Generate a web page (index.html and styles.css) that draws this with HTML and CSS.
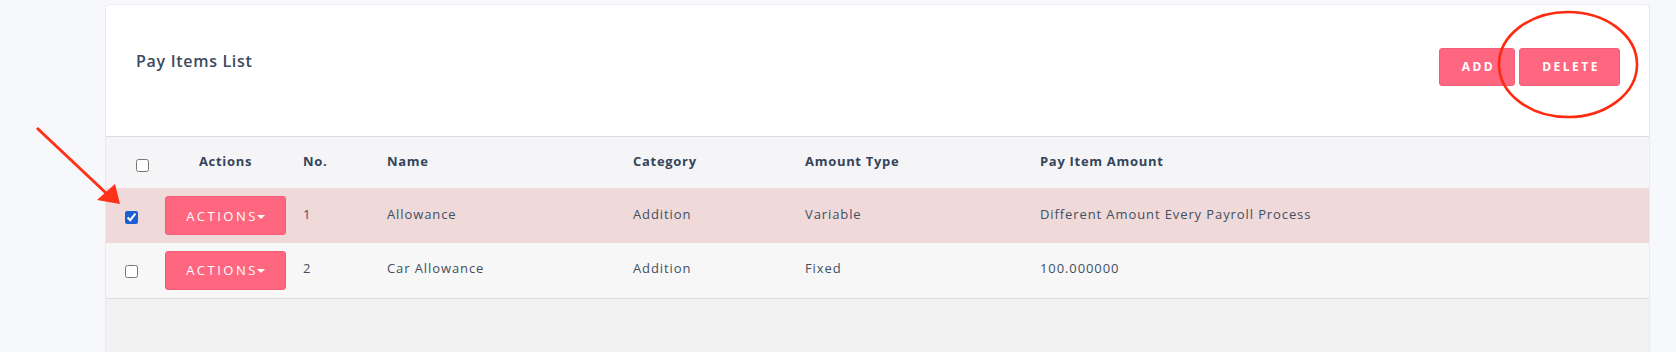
FILE: index.html
```html
<!DOCTYPE html>
<html lang="en">
  <head>
    <meta charset="UTF-8" />
    <meta name="viewport" content="width=device-width, initial-scale=1.0" />
    <title>Pay Items List</title>
    <link rel="stylesheet" href="styles.css">
  </head>
  <body>
    <section class="panel">
      <div class="panel-head">
        <h1>Pay Items List</h1>
        <div class="head-buttons">
          <button class="pink-btn">ADD</button>
          <button class="pink-btn">DELETE</button>
        </div>
      </div>

      <table class="pay-table">
        <colgroup>
          <col style="width: 49px" />
          <col style="width: 138px" />
          <col style="width: 84px" />
          <col style="width: 246px" />
          <col style="width: 172px" />
          <col style="width: 235px" />
          <col />
        </colgroup>
        <thead>
          <tr>
            <th class="check-head"><input type="checkbox" /></th>
            <th class="actions-head">Actions</th>
            <th>No.</th>
            <th>Name</th>
            <th>Category</th>
            <th>Amount Type</th>
            <th>Pay Item Amount</th>
          </tr>
        </thead>
        <tbody>
          <tr class="selected">
            <td class="check-cell"><input type="checkbox" checked /></td>
            <td class="actions-cell"><button class="actions-btn">ACTIONS<span class="caret"></span></button></td>
            <td>1</td>
            <td>Allowance</td>
            <td>Addition</td>
            <td>Variable</td>
            <td>Different Amount Every Payroll Process</td>
          </tr>
          <tr>
            <td class="check-cell"><input type="checkbox" /></td>
            <td class="actions-cell"><button class="actions-btn">ACTIONS<span class="caret"></span></button></td>
            <td>2</td>
            <td>Car Allowance</td>
            <td>Addition</td>
            <td>Fixed</td>
            <td>100.000000</td>
          </tr>
        </tbody>
      </table>
    </section>

    <!-- annotation drawn on top of the screenshot -->
    <svg class="marks" width="1676" height="352" viewBox="0 0 1676 352">
      <ellipse cx="1568" cy="64.5" rx="69" ry="52.5" fill="none" stroke="#ff2a10" stroke-width="2.6" />
      <line x1="37" y1="128" x2="106" y2="193" stroke="#ff3118" stroke-width="3" />
      <polygon points="120,204 97,200 115,184" fill="#ff3118" />
    </svg>
  </body>
</html>
```

FILE: styles.css
```css
body {
  margin: 0;
  padding: 4px 26px 0 105px;
  height: 352px;
  box-sizing: border-box;
  overflow: hidden;
  background: #f7f8fc;
  font-family: "Open Sans", "Liberation Sans", sans-serif;
  position: relative;
}

.panel {
  height: 100%;
  background: #f2f2f2;
  border-left: 1px solid #e9eaf0;
  border-right: 1px solid #e9eaf0;
  border-top: 1px solid #eceef3;
  border-radius: 4px 4px 0 0;
  box-sizing: border-box;
}

.panel-head {
  height: 131px;
  background: #fff;
  border-bottom: 1px solid #dcdcdf;
  border-radius: 4px 4px 0 0;
  display: flex;
  justify-content: space-between;
  align-items: center;
  padding: 0 29px 0 30px;
}

.panel-head h1 {
  margin: 0 0 20px;
  font-size: 16px;
  font-weight: 600;
  letter-spacing: 0.7px;
  color: #3a4a60;
}

.head-buttons {
  display: flex;
  gap: 4px;
  margin-top: -8px;
}

.pink-btn {
  height: 38px;
  padding: 0 19px 0 22px;
  background: #ff6680;
  border: 1px solid #f45d77;
  border-radius: 3px;
  color: #fff;
  font-family: inherit;
  font-size: 12px;
  font-weight: 700;
  letter-spacing: 2.5px;
}

.pay-table {
  width: 100%;
  border-collapse: collapse;
  table-layout: fixed;
  font-size: 13px;
  letter-spacing: 0.9px;
}

.pay-table tr {
  height: 55px;
}

.pay-table thead tr {
  height: 51px;
}

.pay-table th {
  padding: 0 0 4px 10px;
  background: #f5f5f7;
  color: #34445a;
  font-weight: 700;
  letter-spacing: 0.7px;
  text-align: left;
}

.pay-table td {
  padding: 0 0 4px 10px;
  background: #f7f7f7;
  color: #414f63;
}

.pay-table tbody tr:last-child td {
  border-bottom: 1px solid #dcdcdf;
}

.pay-table tr.selected td {
  background: #efd9d9;
}

.pay-table input[type="checkbox"] {
  width: 13px;
  height: 13px;
  margin: 0;
  vertical-align: middle;
  accent-color: #1b5fd2;
}

.pay-table .check-head {
  padding: 0 0 0 30px;
}

.pay-table .check-head input {
  margin-top: 4px;
}

.pay-table .check-cell {
  padding: 0 0 0 19px;
}

.pay-table .actions-head {
  text-align: center;
  padding: 0 7px 4px 10px;
}

.pay-table .actions-cell {
  padding: 0 0 0 10px;
}

.actions-btn {
  width: 121px;
  height: 39px;
  background: #ff6680;
  border: 1px solid #f45d77;
  border-radius: 3px;
  color: #fff;
  font-family: inherit;
  font-size: 13px;
  letter-spacing: 2.5px;
  padding: 0;
}

.caret {
  display: inline-block;
  width: 0;
  height: 0;
  margin-left: -1px;
  vertical-align: 2px;
  border-left: 4px solid transparent;
  border-right: 4px solid transparent;
  border-top: 4px solid #fff;
}

.marks {
  position: absolute;
  top: 0;
  left: 0;
  pointer-events: none;
}
```
